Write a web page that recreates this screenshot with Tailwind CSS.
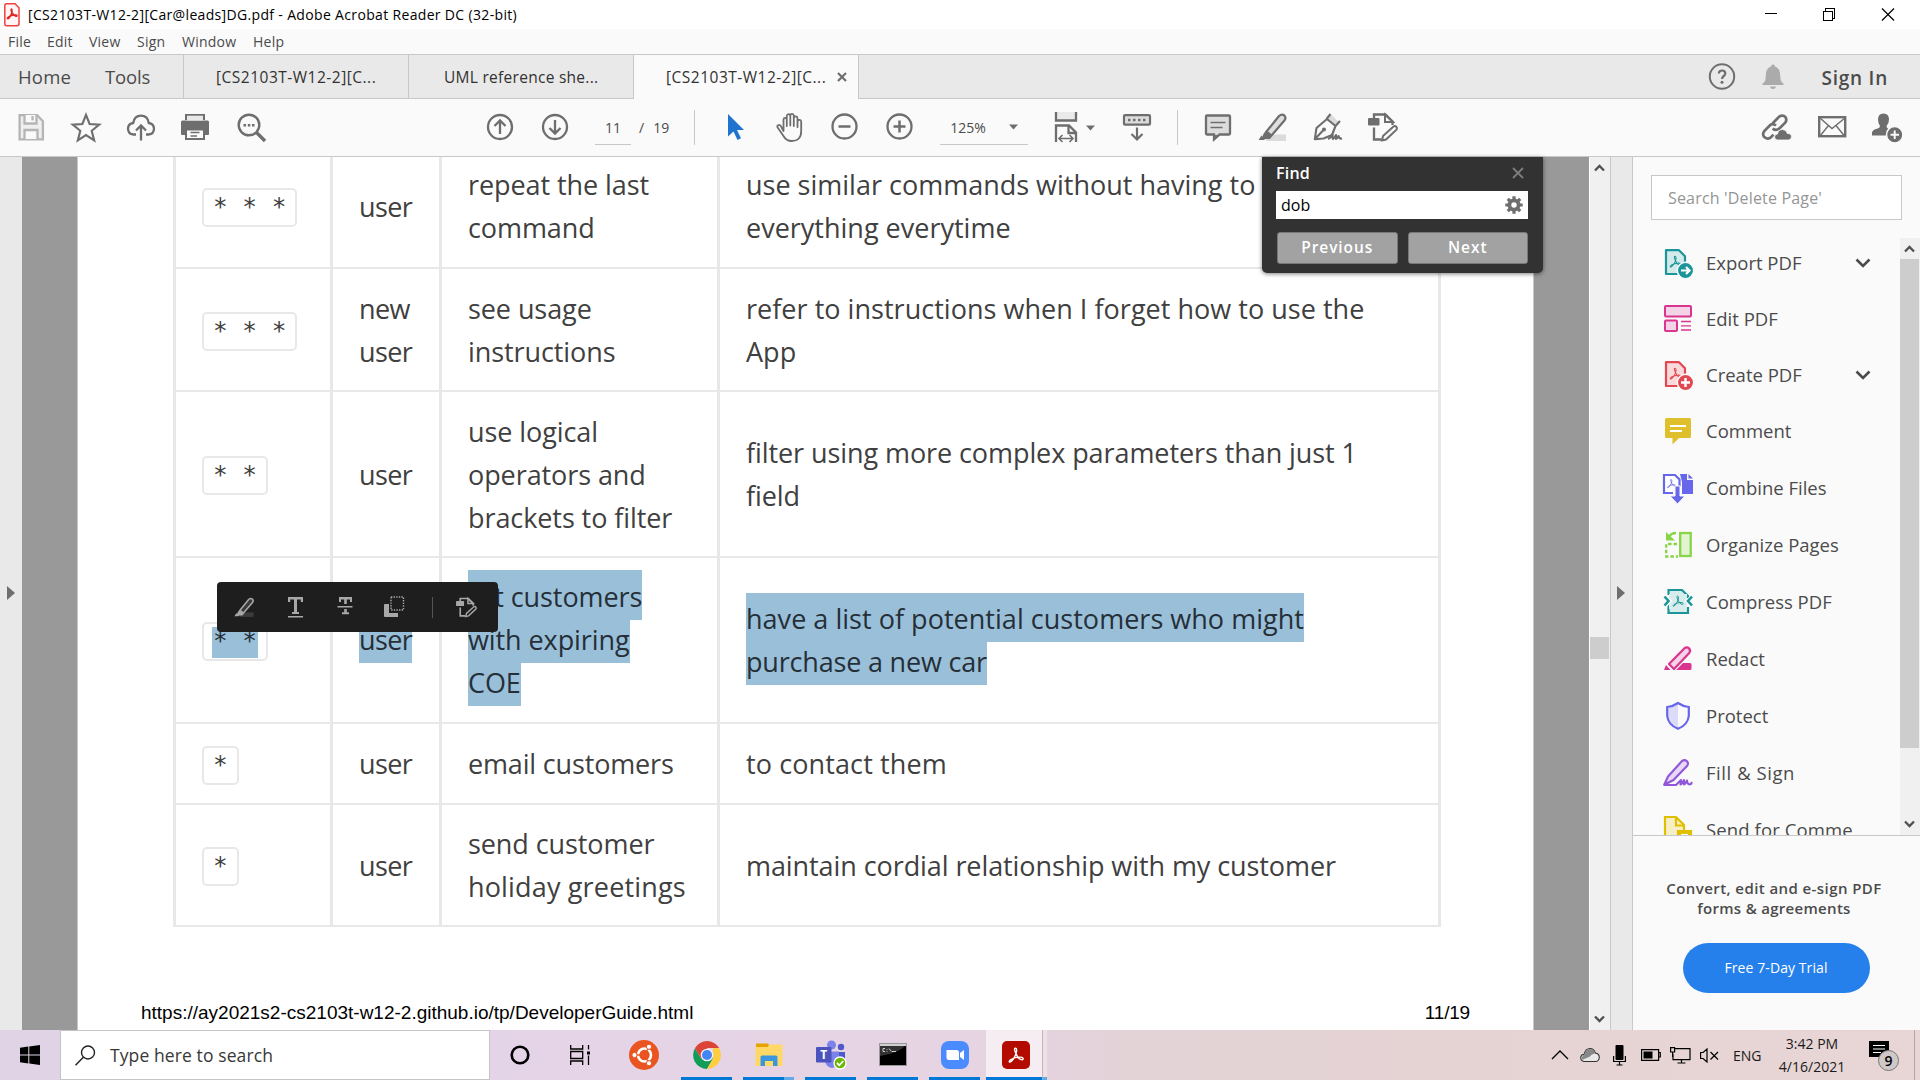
<!DOCTYPE html>
<html lang="en">
<head>
<meta charset="utf-8">
<title>[CS2103T-W12-2][Car@leads]DG.pdf - Adobe Acrobat Reader DC (32-bit)</title>
<script src="https://cdn.jsdelivr.net/npm/@tailwindcss/browser@4"></script>
</head>
<body class="w-[1920px] h-[1080px] overflow-hidden bg-white font-['Open_Sans',sans-serif] text-[#4b4b4b] flex flex-col whitespace-nowrap">

<!-- shared symbols -->
<svg class="hidden">
  <symbol id="tri" viewBox="0 0 32 32"><path d="M15 6c-2 0-1 4 1 8 2 5 6 9 9 9 3-1 1-4-3-4-5 0-11 2-14 4-3 3-2 4 0 3 4-2 8-10 9-16 0-2-1-4-2-4z" fill="none" stroke="currentColor" stroke-width="2"/></symbol>
  <symbol id="redactdoc" viewBox="0 0 32 33"><path d="M7 7V3.5h11.5l7 7V14M7 16.500V28.500h7.500" fill="none" stroke="currentColor" stroke-width="2.300"/><path d="M18 3.500v7.500h8z" fill="#fff" fill-opacity=".2" stroke="currentColor" stroke-width="2"/><rect x="1" y="7" width="11.500" height="7.500" rx="1" fill="currentColor"/><path d="M15 29.500l1-4.500 10.500-9.500q1.500-1 2.800.3t.2 2.900L19 28.500z" fill="none" stroke="currentColor" stroke-width="2"/></symbol>
  <symbol id="hl" viewBox="0 0 32 33"><rect x="9" y="23.500" width="20" height="6.500" fill="currentColor" opacity=".22"/><path d="M9.500 20.500L22 5q3-2.500 5.500-.3 2 2.300-.3 5L14.500 24.500z" fill="currentColor" fill-opacity=".2" stroke="currentColor" stroke-width="2.200" stroke-linejoin="round"/><path d="M8.500 20l6.500 5.500-2 2.500H6.500L5.800 24zM1.500 29l3-4.500 4 3.300L7 29z" fill="currentColor"/></symbol>
</svg>

<!-- title bar -->
<header class="h-[29px] shrink-0 flex items-center text-black text-[14px] pl-[4px]">
  <svg class="w-4 h-6" viewBox="0 0 16 24"><path d="M2.500.8h8.500l4 4v16q0 2-2 2H2.500q-1.700 0-1.700-2V2.800q0-2 1.700-2z" fill="#fff5f5" stroke="#f2413c" stroke-width="1.500"/><path d="M7.500 6c-1 1 0 3 1.500 5s4 3 4 1.700-5-.7-7.500.8-2.500 2-1.500 2.200S8 11 8 8.500 8 6 7.500 6z" fill="none" stroke="#e3251f" stroke-width="1.500"/></svg>
  <span class="ml-[8px] tracking-[0.024em]">[CS2103T-W12-2][Car@leads]DG.pdf - Adobe Acrobat Reader DC (32-bit)</span>
  <svg class="w-[132px] h-[14px] ml-auto mr-[25px] mb-[2px]" viewBox="0 0 132 14" fill="none" stroke="#000" stroke-width="1" shape-rendering="crispEdges"><path d="M2 6.500h12M60.500 4.500h9v9h-9zM62.500 4V1.500h9.500M71.500 1.500v9.500H70"/><path d="M119 1.500l12 12M131 1.500l-12 12" shape-rendering="auto" stroke-width="1.200"/></svg>
</header>

<!-- menu bar -->
<nav class="h-[25px] shrink-0 bg-[#fafafa] flex items-center text-[14px] text-[#4b4b4b] pl-[8px] tracking-[0.016em]">
  <span class="w-[39px]">File</span><span class="w-[42px]">Edit</span><span class="w-[48px]">View</span><span class="w-[45px]">Sign</span><span class="w-[71px]">Window</span><span>Help</span>
</nav>

<!-- tab bar -->
<div class="h-[45px] shrink-0 bg-[#e9e9e9] border-t border-[#c8c8c8] flex text-[15.500px] text-[#323232]">
  <div class="w-[184px] border-r border-b border-[#c8c8c8] flex items-center pl-[18px] text-[18.500px] text-[#4b4b4b] tracking-[0.01em]"><span class="w-[87px]">Home</span><span class="tracking-[-0.01em]">Tools</span></div>
  <div class="w-[225px] border-r border-b border-[#c8c8c8] flex items-center pl-[32px] pt-[2px] tracking-[0.032em]">[CS2103T-W12-2][C...</div>
  <div class="w-[225px] border-r border-b border-[#c8c8c8] flex items-center pl-[35px] pt-[2px] tracking-[0.018em]">UML reference she...</div>
  <div class="w-[225px] border-r border-[#c8c8c8] bg-[#fafafa] flex items-center pl-[32px] pt-[2px] tracking-[0.032em]">[CS2103T-W12-2][C...<svg class="w-[10px] h-[10px] ml-[11px] mb-[3px]" viewBox="0 0 10 10"><path d="M1 1l8 8M9 1L1 9" stroke="#6e6e6e" stroke-width="2.200"/></svg></div>
  <div class="flex-1 border-b border-[#c8c8c8] flex items-center justify-end pr-[32px] text-[#6e6e6e]">
    <svg class="w-[28px] h-[28px]" viewBox="0 0 28 28"><circle cx="14" cy="13.500" r="12.200" fill="none" stroke="currentColor" stroke-width="2"/><path d="M10.800 10.500q.2-3 3.300-3t3.200 2.800q0 1.500-1.600 2.700t-1.600 3" fill="none" stroke="currentColor" stroke-width="2.200"/><circle cx="14" cy="19.300" r="1.500" fill="currentColor"/></svg>
    <svg class="w-[22px] h-[26px] ml-[26px] text-[#ababab]" viewBox="0 0 22 26"><path d="M9 2.500q0-2 2-2t2 2q4.500 1.500 5 6.500.3 6 1 8 .8 1.800 2.500 2.500V21H.5v-1.500Q2.200 18.800 3 17q.7-2 1-8 .5-5 5-6.500zM8 22.500h6q-.5 2.500-3 2.500t-3-2.500z" fill="currentColor"/></svg>
    <span class="ml-[38px] mt-[3px] text-[19px] font-semibold text-[#4b4b4b] tracking-[0.04em]">Sign In</span>
  </div>
</div>

<!-- toolbar -->
<div class="h-[58px] shrink-0 bg-[#fafafa] border-b border-[#c8c8c8] flex items-center pl-[15px] text-[#6e6e6e]">
  <div class="flex gap-[23px]">
    <svg class="w-8 h-[33px]" viewBox="0 0 32 33" fill="none" stroke="#b5b5b5" stroke-width="2.300"><path d="M4.600 4.200h17.500l5.800 6V28.300H4.600z" fill="#efefef"/><path d="M9.500 4v8.500h12V4M9.500 28v-9h13v9" fill="#fafafa"/><path d="M17.500 5v4.500"/></svg>
    <svg class="w-8 h-[33px]" viewBox="0 0 32 33"><path d="M16 3.800l3.600 9.200 9.700.6-7.600 6.200 2.500 9.600L16 24l-8.200 5.400 2.500-9.600-7.600-6.200 9.700-.6z" fill="none" stroke="currentColor" stroke-width="2.100"/></svg>
    <svg class="w-8 h-[33px]" viewBox="0 0 32 33" fill="none" stroke="currentColor" stroke-width="2.300"><path d="M11 23.500H8.500q-5.500-.5-5.500-6 .3-5 5.200-5.500Q9.500 4.700 16 4.700T23.800 12q4.800.5 5.200 5.500 0 5.500-5.500 6H21M16 29.500V15M11 19.500l5-5 5 5"/></svg>
    <svg class="w-8 h-[33px]" viewBox="1 0 32 33"><path d="M6 3h20v6H6zM2 11q0-1.500 1.500-1.500h25Q30 9.500 30 11v12q0 1-1 1h-3v-6H6v6H3q-1 0-1-1z" fill="currentColor"/><path d="M8 4.700h16V9.500H8z" fill="#e8e8e8"/><path d="M7 18.500h18V28H7z" fill="#fafafa" stroke="currentColor" stroke-width="2"/><path d="M11.500 21.500h9M11.500 25h6.500" stroke="currentColor" stroke-width="1.500"/></svg>
    <svg class="w-8 h-[33px]" viewBox="0 0 32 33"><circle cx="14" cy="14" r="10.300" fill="none" stroke="currentColor" stroke-width="2.400"/><path d="M21.500 21.500l8.500 8.500" stroke="currentColor" stroke-width="3.300"/><path d="M8.500 13h2.500v2.500H8.500zM12.800 13h2.500v2.500h-2.500zM17 13h2.500v2.500H17z" fill="currentColor"/></svg>
  </div>
  <svg class="w-8 h-[33px] ml-[217px]" viewBox="0 0 32 33" fill="none" stroke="currentColor" stroke-width="2.300"><circle cx="16" cy="16" r="12"/><path d="M16 23V10M10.500 15L16 9.500l5.500 5.500"/></svg>
  <svg class="w-8 h-[33px] ml-[23px]" viewBox="0 0 32 33" fill="none" stroke="currentColor" stroke-width="2.300"><circle cx="16" cy="16" r="12"/><path d="M16 9v13M10.500 17l5.500 5.500 5.500-5.500"/></svg>
  <div class="ml-[24px] w-[36px] h-[35px] border-b border-[#c8c8c8] text-[14px] text-[#4b4b4b] flex items-center justify-center">11</div>
  <span class="ml-[8px] text-[14px] text-[#4b4b4b]">/</span><span class="ml-[9px] w-[16px] text-[14px] text-[#4b4b4b]">19</span>
  <div class="w-px h-[35px] bg-[#c8c8c8] ml-[25px]"></div>
  <div class="flex gap-[23px] ml-[24px]">
    <svg class="w-8 h-[33px]" viewBox="0 0 32 33"><path d="M9 3v22.500l5.500-5 4 8.500 3.500-1.800-4-8.200h7z" fill="#2074d0"/></svg>
    <svg class="w-8 h-[33px]" viewBox="0 0 32 33"><path d="M9.500 20V8.500q.2-1.700 1.700-1.700t1.600 1.700V15 5q.2-1.800 1.800-1.800T16.300 5v9.500V4.500q.2-1.700 1.800-1.700t1.700 1.700V15 7q.3-1.700 1.900-1.700T23.500 7v9-5.500q.3-1.700 1.900-1.700t1.800 1.700V20q0 10-9.500 10-5.500 0-8.200-5L3.500 16.300q-.6-1.700 1-2.300 1.400-.4 2.500 1.300z" fill="#fafafa" stroke="currentColor" stroke-width="1.800" stroke-linejoin="round"/></svg>
    <svg class="w-8 h-[33px]" viewBox="0 0 32 33" fill="none" stroke="currentColor" stroke-width="2.300"><circle cx="15.500" cy="15.500" r="12"/><path d="M9.500 15.500h12" stroke-width="2.500"/></svg>
    <svg class="w-8 h-[33px]" viewBox="0 0 32 33" fill="none" stroke="currentColor" stroke-width="2.300"><circle cx="15.500" cy="15.500" r="12"/><path d="M9.500 15.500h12M15.500 9.500v12" stroke-width="2.500"/></svg>
  </div>
  <div class="ml-[24px] w-[88px] h-[35px] border-b border-[#c8c8c8] text-[14px] text-[#4b4b4b] flex items-center justify-between pl-[10px] pr-[10px]">125%<svg class="w-[9px] h-[6px]" viewBox="0 0 9 6"><path d="M0 .5h9L4.500 5.500z" fill="#6e6e6e"/></svg></div>
  <svg class="w-8 h-[33px] ml-[22px]" viewBox="0 0 32 33" fill="none" stroke="currentColor" stroke-width="2.300"><path d="M6 1v8.500h20V1" fill="#eaeaea"/><path d="M6 31V14.500h13l7 7V31M18.500 15v7H26"/><path d="M9 27.500h14M12.500 24L9 27.500l3.500 3.500M19.500 24l3.500 3.500-3.500 3.500" stroke-width="1.600"/></svg>
  <svg class="w-[9px] h-[6px] ml-[4px]" viewBox="0 0 9 6"><path d="M0 .5h9L4.500 5.500z" fill="#6e6e6e"/></svg>
  <svg class="w-8 h-[33px] ml-[26px]" viewBox="0 0 32 33" fill="none" stroke="currentColor" stroke-width="2.200"><rect x="3" y="4.200" width="26" height="9.500" rx="1" fill="#ddd"/><path d="M7 9h18" stroke-dasharray="2.500 2.500" stroke-width="2.500"/><path d="M16 16.500V28M10.500 23l5.500 5.500 5.500-5.500"/></svg>
  <div class="w-px h-[35px] bg-[#c8c8c8] ml-[24px]"></div>
  <div class="flex gap-[23px] ml-[24px]">
    <svg class="w-8 h-[33px]" viewBox="0 0 32 33"><path d="M5 4.500h22q1 0 1 1v17q0 1-1 1H17.500L12 28.500v-5H5q-1 0-1-1v-17q0-1 1-1z" fill="#dcdcdc" stroke="currentColor" stroke-width="2.300"/><path d="M8.500 11.500h15M8.500 16.500h12" stroke="currentColor" stroke-width="1.500"/><path d="M12 24h6l-6 5.500z" fill="currentColor"/></svg>
    <svg class="w-8 h-[33px]"><use href="#hl"/></svg>
    <svg class="w-8 h-[33px]" viewBox="0 0 32 33" fill="none" stroke="currentColor" stroke-width="2.100" stroke-linejoin="round"><path d="M15 8l4-4.500 8 7.500-3.500 4z" fill="#dcdcdc" stroke="none"/><path d="M2.800 28.200L4.500 17 15 8l8.500 7-3.500 9-8.500 3.500zM3 28l8-8.500M18.500 3l-4 5M28 10l-4.500 5"/><circle cx="12" cy="18.500" r="1" fill="currentColor"/><path d="M16 28q3-1 4.500-4.500 0 4 .5 4.500 1.500-1 3-4v4q1.500-1 2.500-3 .5 3 3.500 2.500"/></svg>
    <svg class="w-8 h-[33px]"><use href="#redactdoc"/></svg>
  </div>
  <div class="flex gap-[23px] ml-auto mr-[17px]">
    <svg class="w-8 h-[33px]" viewBox="1 0 32 33" fill="none" stroke="currentColor" stroke-width="2.700"><path d="M12.500 12.500l6.500-6.800q4-2.500 6.500.5 1.800 2.800-.3 5.500l-6 6q-3.500 2.500-6.500-.3M16 14.500q-3.500-2.500-6-.2l-5.500 5.500q-2.500 3-.5 6 3 3 6.500.8l3-3"/><path d="M17.500 29q-3-.3-3-3t3-3q.7-4.500 4.800-4.500t5 4q4.200-.2 4.200 3.500-.2 2.700-3 3z" fill="currentColor" stroke="#fafafa" stroke-width=".8"/></svg>
    <svg class="w-8 h-[33px]" viewBox="0 0 32 33" fill="none" stroke="currentColor"><rect x="3.200" y="6.200" width="26" height="19" stroke-width="2.400"/><path d="M4 7l12 10.500L29 7M4 25l8.500-10.500M28.500 25L20 14.500" stroke-width="1.400"/></svg>
    <svg class="w-8 h-[33px]" viewBox="0 0 32 33"><path d="M12.500 2.500q5.500 0 5.500 6 0 4-2.500 6.500 0 2 2 3 2.500 1 2.500 2l-3 4.500H1v-3q.5-2.800 5-3.800 3-.7 3-2.700Q7 12.500 7 8.500q0-6 5.500-6z" fill="currentColor"/><circle cx="23.700" cy="23.700" r="8.200" fill="currentColor" stroke="#fafafa" stroke-width="1.500"/><path d="M23.700 19.500v8.500M19.500 23.700H28" stroke="#fafafa" stroke-width="2"/></svg>
  </div>
</div>

<!-- workspace -->
<main class="h-[873px] shrink-0 flex relative">
  <div class="w-[22px] bg-[#e9e9e9] flex items-center pl-[7px]"><svg class="w-[8px] h-[14px] mb-[2px]" viewBox="0 0 8 14"><path d="M0 0l8 7-8 7z" fill="#6e6e6e"/></svg></div>
  <div class="w-[1567px] bg-[#999] flex pl-[55px] overflow-hidden">
    <!-- page -->
    <section class="w-[1457px] h-full bg-white border-x border-[#c8c8c8] flex flex-col relative">
      <div class="ml-[95px] mt-[-14px] w-[1268px] border-r-[3px] border-b-2 border-[#e8e8e8] text-[27px] leading-[43px] text-[#404040] tracking-[-0.003em]">
        <div class="h-[124px] flex border-t-2 border-[#e8e8e8] [&>div]:border-l-[3px] [&>div]:border-[#e8e8e8] [&>div]:flex [&>div]:items-center [&>div]:pl-[26px]">
          <div class="w-[157px]"><code class="mt-[3px] h-[39px] px-[9px] border-2 border-[#e8e8e8] rounded-[5px] font-['DejaVu_Sans_Mono',monospace] text-[24.400px] leading-[34px] tracking-normal">* * *</code></div>
          <div class="w-[109px] tracking-[-0.022em]">user</div><div class="w-[278px]">repeat the last<br>command</div><div class="flex-1 tracking-normal">use similar commands without having to<br>everything everytime</div>
        </div>
        <div class="h-[123px] flex border-t-2 border-[#e8e8e8] [&>div]:border-l-[3px] [&>div]:border-[#e8e8e8] [&>div]:flex [&>div]:items-center [&>div]:pl-[26px]">
          <div class="w-[157px]"><code class="mt-[3px] h-[39px] px-[9px] border-2 border-[#e8e8e8] rounded-[5px] font-['DejaVu_Sans_Mono',monospace] text-[24.400px] leading-[34px] tracking-normal">* * *</code></div>
          <div class="w-[109px] tracking-[-0.022em]">new<br>user</div><div class="w-[278px]">see usage<br>instructions</div><div class="flex-1 tracking-[0.001em]">refer to instructions when I forget how to use the<br>App</div>
        </div>
        <div class="h-[166px] flex border-t-2 border-[#e8e8e8] [&>div]:border-l-[3px] [&>div]:border-[#e8e8e8] [&>div]:flex [&>div]:items-center [&>div]:pl-[26px]">
          <div class="w-[157px]"><code class="mt-[3px] h-[39px] px-[9px] border-2 border-[#e8e8e8] rounded-[5px] font-['DejaVu_Sans_Mono',monospace] text-[24.400px] leading-[34px] tracking-normal">* *</code></div>
          <div class="w-[109px] tracking-[-0.022em]">user</div><div class="w-[278px]">use logical<br>operators and<br>brackets to filter</div><div class="flex-1">filter using more complex parameters than just 1<br>field</div>
        </div>
        <div class="h-[166px] flex border-t-2 border-[#e8e8e8] text-[#262f38] [&>div]:border-l-[3px] [&>div]:border-[#e8e8e8] [&>div]:flex [&>div]:flex-col [&>div]:items-start [&>div]:justify-center [&>div]:pl-[26px] [&>div]:pt-[3px] [&_span]:bg-[#9ac0d9] [&_span]:h-[43px] [&_span]:leading-[40px]">
          <div class="w-[157px]"><code class="h-[39px] px-[8px] border-2 border-[#e8e8e8] rounded-[5px] font-['DejaVu_Sans_Mono',monospace] text-[24.400px] tracking-normal flex items-end"><b class="bg-[#9ac0d9] font-normal h-[31px] mb-[1px] leading-[27px] pl-[1px] pr-[1px]">* *</b></code></div>
          <div class="w-[109px] tracking-[-0.022em]"><span>user</span></div><div class="w-[278px]"><span class="mt-[-7px] pt-[7px] box-content">list customers</span><span>with expiring</span><span>COE</span></div><div class="flex-1"><span class="mt-[-6px] pt-[6px] box-content tracking-[0.001em]">have a list of potential customers who might</span><span class="tracking-[-0.007em]">purchase a new car</span></div>
        </div>
        <div class="h-[81px] flex border-t-2 border-[#e8e8e8] [&>div]:border-l-[3px] [&>div]:border-[#e8e8e8] [&>div]:flex [&>div]:items-center [&>div]:pl-[26px]">
          <div class="w-[157px]"><code class="mt-[3px] h-[39px] px-[9px] border-2 border-[#e8e8e8] rounded-[5px] font-['DejaVu_Sans_Mono',monospace] text-[24.400px] leading-[34px] tracking-normal">*</code></div>
          <div class="w-[109px] tracking-[-0.022em]">user</div><div class="w-[278px] tracking-[-0.006em]">email customers</div><div class="flex-1 tracking-[0.004em]">to contact them</div>
        </div>
        <div class="h-[122px] flex border-t-2 border-[#e8e8e8] [&>div]:border-l-[3px] [&>div]:border-[#e8e8e8] [&>div]:flex [&>div]:items-center [&>div]:pl-[26px]">
          <div class="w-[157px]"><code class="mt-[3px] h-[39px] px-[9px] border-2 border-[#e8e8e8] rounded-[5px] font-['DejaVu_Sans_Mono',monospace] text-[24.400px] leading-[34px] tracking-normal">*</code></div>
          <div class="w-[109px] tracking-[-0.022em]">user</div><div class="w-[278px]"><p>send customer<br><span class="tracking-[0.006em]">holiday greetings</span></p></div><div class="flex-1">maintain cordial relationship with my customer</div>
        </div>
      </div>
      <footer class="mt-auto mb-[5px] flex justify-between pl-[63px] pr-[63px] font-['Liberation_Sans',sans-serif] text-[19px] leading-[24px] text-black"><span>https://ay2021s2-cs2103t-w12-2.github.io/tp/DeveloperGuide.html</span><span class="tracking-[-0.01em]">11/19</span></footer>
      <!-- selection toolbar -->
      <div class="absolute left-[139px] top-[425px] w-[281px] h-[50px] rounded-[4px] bg-[#1e1e1e] text-[#a8a8a8] flex items-center">
        <svg class="w-[23px] h-[23px] ml-[16px]"><use href="#hl"/></svg>
        <svg class="w-[22px] h-[24px] ml-[28px]" viewBox="0 0 22 24" fill="currentColor"><path d="M4 2h15v5h-2.200V4.500h-3.800V17H15v2H8v-2h2V4.500H6.200V7H4zM4 21h15v1.500H4z"/></svg>
        <svg class="w-[22px] h-[24px] ml-[28px]" viewBox="0 0 22 24" fill="currentColor"><path d="M5 2h13v5h-2V4.500h-3.200V9h-2.600V4.500H7V7H5zM3.500 11h15v1.500h-15zM10.200 14h2.600v3.200H15v2H8v-2h2.200z"/></svg>
        <svg class="w-[22px] h-[24px] ml-[27px]" viewBox="0 0 22 24"><path d="M1 10q0-1 1-1h4v9h9v4H2q-1 0-1-1z" fill="currentColor"/><rect x="8" y="2" width="12.500" height="13" fill="none" stroke="currentColor" stroke-width="1.400" stroke-dasharray="1.400 1.200"/></svg>
        <div class="w-px h-[21px] bg-[#555] ml-[27px]"></div>
        <svg class="w-[23px] h-[23px] ml-[22px]"><use href="#redactdoc"/></svg>
      </div>
    </section>
  </div>
  <!-- document scrollbar -->
  <div class="w-[22px] border-l border-r border-[#c8c8c8] border-l-white bg-[#f0f0f0] flex flex-col items-center text-[#505050]">
    <svg class="w-[11px] h-[8px] mt-[7px] mr-[2px]" viewBox="0 0 11 8"><path d="M1 6.500l4.500-4.500L10 6.500" fill="none" stroke="currentColor" stroke-width="2.300"/></svg>
    <div class="w-[19px] h-[22px] bg-[#cdcdcd] mt-[465px] mr-[1px]"></div>
    <svg class="w-[11px] h-[8px] mt-auto mb-[7px] mr-[2px]" viewBox="0 0 11 8"><path d="M1 1.500L5.500 6 10 1.500" fill="none" stroke="currentColor" stroke-width="2.300"/></svg>
  </div>
  <div class="w-[22px] bg-[#e9e9e9] border-r border-[#c8c8c8] flex items-center pl-[6px]"><svg class="w-[8px] h-[14px] mb-[2px]" viewBox="0 0 8 14"><path d="M0 0l8 7-8 7z" fill="#6e6e6e"/></svg></div>

  <!-- tools panel -->
  <aside class="w-[287px] bg-[#fafafa] flex flex-col">
    <div class="h-[81px] pt-[18px] pl-[18px]"><div class="w-[251px] h-[45px] bg-white border border-[#c8c8c8] text-[16px] text-[#959595] flex items-center pl-[16px] tracking-[0.011em]">Search 'Delete Page'</div></div>
    <div class="h-[598px] border-b border-[#c8c8c8] flex overflow-hidden">
      <ul class="w-[267px] mt-[-1px] text-[18.500px] [&>li]:flex [&>li]:items-center [&>li]:pl-[29px] [&_svg]:shrink-0 [&_b]:font-normal [&_b]:ml-[12px] [&>li]:h-[57px]">
        <li class="!h-[52px]"><svg class="w-8 h-8 text-[#1b959a]" viewBox="0 0 32 32"><path d="M4 3.200h13l6 6V27H4z" fill="#d3eaeb" stroke="currentColor" stroke-width="2.200" stroke-linejoin="round"/><use href="#tri" x="5" y="6" width="17" height="17"/><circle cx="23.500" cy="23.500" r="8.200" fill="currentColor" stroke="#fafafa" stroke-width="1.500"/><path d="M19 23.500h8M24 20l3.500 3.500L24 27" fill="none" stroke="#fff" stroke-width="2.200"/></svg><b>Export PDF</b><svg class="w-4 h-[10px] ml-auto mr-[29px]" viewBox="0 0 16 10"><path d="M1.500 1.500L8 8l6.500-6.500" fill="none" stroke="#4b4b4b" stroke-width="2.600"/></svg></li>
        <li class="!h-[60px]"><svg class="w-8 h-8 text-[#da3490]" viewBox="0 0 32 32" fill="none" stroke="currentColor" stroke-width="2"><rect x="3" y="3" width="26" height="10.500" rx="1" fill="#f5d3e6"/><rect x="3" y="17.500" width="12" height="10.500" rx="1" fill="#f5d3e6"/><path d="M19 18.500h10M19 22.800h10M19 27h10" stroke-width="1.300"/></svg><b>Edit PDF</b></li>
        <li class="!h-[52px]"><svg class="w-8 h-8 text-[#e34850]" viewBox="0 0 32 32"><path d="M4 3.200h13l6 6V27H4z" fill="#f9dadc" stroke="currentColor" stroke-width="2.200" stroke-linejoin="round"/><use href="#tri" x="5" y="6" width="17" height="17"/><circle cx="23.500" cy="23.500" r="8.200" fill="currentColor" stroke="#fafafa" stroke-width="1.500"/><path d="M19 23.500h9M23.500 19v9" fill="none" stroke="#fff" stroke-width="2.400"/></svg><b>Create PDF</b><svg class="w-4 h-[10px] ml-auto mr-[29px]" viewBox="0 0 16 10"><path d="M1.500 1.500L8 8l6.500-6.500" fill="none" stroke="#4b4b4b" stroke-width="2.600"/></svg></li>
        <li class="!h-[60px]"><svg class="w-8 h-8" viewBox="0 0 32 32"><path d="M4.500 3h23q1.500 0 1.500 1.500v17q0 1.500-1.500 1.500H17l-6.500 6.500V23h-6Q3 23 3 21.500v-17Q3 3 4.500 3z" fill="#dfbf2c"/><path d="M8 11h16M8 16h12" stroke="#fff" stroke-width="2"/></svg><b>Comment</b></li>
        <li class="!h-[54px]"><svg class="w-8 h-8 text-[#6767ec]" viewBox="0 0 32 32"><path d="M18 2h7v6h6v14H20V10z" fill="currentColor"/><path d="M26.500 2l4.500 4.500h-4.500z" fill="currentColor"/><path d="M11 21H2V3h11l4.500 4.500V14" fill="#fff" stroke="currentColor" stroke-width="2.200"/><use href="#tri" x="3" y="5" width="13" height="13" class="text-[#6767ec]"/><path d="M13 14h5v10h5l-7.500 8L8 24h5z" fill="currentColor" stroke="#fafafa" stroke-width="1"/></svg><b>Combine Files</b></li>
        <li class="!h-[60px]"><svg class="w-8 h-8 text-[#88d547]" viewBox="0 0 32 32" fill="none" stroke="currentColor" stroke-width="2.300"><rect x="18.200" y="4" width="10.500" height="23" fill="#e2f4d2"/><path d="M15 15H4.200v12.500H16" stroke-dasharray="3.500 2"/><path d="M14 4q-5 0-7 4" stroke-width="2.600"/><path d="M4 3v8.500h9z" fill="currentColor" stroke="none"/></svg><b>Organize Pages</b></li>
        <li class="!h-[54px]"><svg class="w-8 h-8 text-[#1b959a]" viewBox="0 0 32 32" fill="none" stroke="currentColor" stroke-width="2.200"><path d="M6.500 9V4H20l6 6v2.500M6.500 19v8H26v-6" fill="#d8ecec"/><path d="M7 8h18v15H7z" fill="#d8ecec" stroke="none"/><use href="#tri" x="8" y="7" width="16" height="16"/><path d="M2.500 11L7 15l-4.500 4.500M30.500 11L26 15l4.500 4.500" stroke="#fafafa" stroke-width="5"/><path d="M2.500 10.500L6.500 15l-4 4.500M30 10.500L26 15l4 4.500" stroke-width="2.600"/></svg><b>Compress PDF</b></li>
        <li class="!h-[60px]"><svg class="w-8 h-8 text-[#da3490]" viewBox="0 0 32 32"><path d="M14 27l7-7h7q1.500 0 1.500 1.500v4q0 1.500-1.500 1.500zM2 27l2-5 4.500 5z" fill="currentColor"/><path d="M7 21L22.500 5.200q2.500-1.700 4.500.2t.3 4.500L12 26z" fill="#f5d3e6" stroke="currentColor" stroke-width="2.200" stroke-linejoin="round"/></svg><b>Redact</b></li>
        <li class="!h-[54px]"><svg class="w-8 h-8 text-[#6767ec]" viewBox="0 0 32 32"><path d="M16 3Q11 6.500 5 7v9q1 9 11 12.500z" fill="#dcdcf9"/><path d="M16 3q-5 3.500-10.800 4v9Q6.200 25 16 28.800 25.800 25 26.800 16V7Q21 6.500 16 3z" fill="none" stroke="currentColor" stroke-width="2.200"/></svg><b>Protect</b></li>
        <li class="!h-[60px]"><svg class="w-8 h-8 text-[#9256d9]" viewBox="0 0 32 32" fill="none" stroke="currentColor" stroke-width="2.100" stroke-linejoin="round"><path d="M2.200 27.800L6 19.500 20 4q2.500-2 5 .2 2 2.300 0 4.800L11.500 23z" fill="#e6d8f6"/><path d="M2 28h12l5-5-.5 4.500q2-1 3.500-4.500v4.500q2-1.500 3-4 .5 5 4 3.500l1-2"/></svg><b class="tracking-[0.03em]">Fill &amp; Sign</b></li>
        <li class="!h-[54px]"><svg class="w-8 h-8 text-[#dfbf00]" viewBox="0 0 32 32" fill="none" stroke="currentColor" stroke-width="2.200"><path d="M3 3h11l8 8v19H3z" fill="#f6eec5"/><path d="M14 3v8.500h8.500"/><path d="M16 17h13v13H16z" fill="currentColor"/><path d="M19 21h7" stroke="#fff"/></svg><b class="tracking-[0.006em]">Send for Comme</b></li>
      </ul>
      <div class="w-[20px] bg-[#f0f0f0] flex flex-col items-center text-[#505050]">
        <svg class="w-[11px] h-[8px] mt-[7px] mr-[2px] shrink-0" viewBox="0 0 11 8"><path d="M1 6.500l4.500-4.500L10 6.500" fill="none" stroke="currentColor" stroke-width="2.300"/></svg>
        <div class="w-[19px] h-[489px] bg-[#cdcdcd] mt-[6px] mr-[1px]"></div>
        <svg class="w-[11px] h-[8px] mt-auto mb-[7px] mr-[2px]" viewBox="0 0 11 8"><path d="M1 1.500L5.500 6 10 1.500" fill="none" stroke="currentColor" stroke-width="2.300"/></svg>
      </div>
    </div>
    <div class="flex-1 flex flex-col items-center pt-[42px] pr-[3px]">
      <p class="text-[15px] leading-[20px] font-semibold text-center tracking-[0.028em] mr-[2px]">Convert, edit and e-sign PDF<br><span class="tracking-[0.02em]">forms &amp; agreements</span></p>
      <div class="mt-[25px] ml-[2px] w-[187px] h-[50px] rounded-full bg-[#2680eb] text-white text-[14px] flex items-center justify-center tracking-[0.006em] pb-px">Free 7-Day Trial</div>
    </div>
  </aside>

  <!-- find box -->
  <div class="absolute left-[1262px] top-0 w-[281px] h-[116px] bg-[#323232] rounded-b-[5px] shadow-[0_1px_4px_rgba(0,0,0,0.5)] text-white pl-[14px] pr-[15px]">
    <div class="h-[34px] flex items-center justify-between text-[16px] font-semibold tracking-[0.013em] pb-[2px]">Find<svg class="w-[12px] h-[12px] mr-[4px] mb-[1px]" viewBox="0 0 12 12"><path d="M1 1l10 10M11 1L1 11" stroke="#7d7d7d" stroke-width="1.800"/></svg></div>
    <div class="h-[28px] bg-white text-black text-[16px] flex items-center justify-between pl-[5px] pr-[5px]">dob<svg class="w-[18px] h-[18px]" viewBox="0 0 18 18"><g stroke="#6e6e6e"><circle cx="9" cy="9" r="4.600" fill="none" stroke-width="3.800"/><path d="M9 .3v3M9 14.700v3M.3 9h3M14.700 9h3M2.800 2.800L5 5M13 13l2.200 2.200M15.200 2.800L13 5M5 13l-2.200 2.200" stroke-width="3.200"/></g></svg></div>
    <div class="flex gap-[10px] mt-[13px] pl-px text-[15.500px] font-semibold tracking-[0.06em]"><div class="w-[121px] h-[32px] rounded-[3px] bg-[#a2a2a2] border border-[#787878] flex items-center justify-center">Previous</div><div class="w-[121px] h-[32px] rounded-[3px] bg-[#a2a2a2] border border-[#787878] flex items-center justify-center">Next</div></div>
  </div>
</main>

<!-- taskbar -->
<footer class="h-[50px] shrink-0 flex bg-[linear-gradient(90deg,#e0d3e6_0%,#e5d4e7_30%,#e6d4e3_50%,#e3d3d6_60%,#e6d3d4_80%,#e8d5d6_100%)]">
  <div class="w-[60px] flex items-center justify-center"><svg class="w-5 h-5" viewBox="0 0 20 20"><path d="M0 2.800L8.300 1.600v7.900H0zM9.300 1.400L20 0v9.500H9.300zM0 10.500h8.300v7.900L0 17.200zM9.300 10.500H20V20L9.300 18.500z"/></svg></div>
  <div class="w-[430px] h-[50px] bg-white border border-[#c4c4c8] flex items-center pl-[14px] text-[17.500px] text-[#383838] tracking-[0.006em]"><svg class="w-[21px] h-[21px] mr-[14px]" viewBox="0 0 21 21"><circle cx="13" cy="7.500" r="6.500" fill="none" stroke="#222" stroke-width="1.400"/><path d="M8.300 12.200L.5 20.300" stroke="#222" stroke-width="1.500"/></svg>Type here to search</div>
  <div class="w-[60px] flex items-center justify-center"><svg class="w-5 h-5" viewBox="0 0 20 20"><circle cx="10" cy="10" r="8.300" fill="none" stroke="#000" stroke-width="2.600"/></svg></div>
  <div class="w-[60px] flex items-center justify-center"><svg class="w-5 h-5" viewBox="0 0 20 20" fill="none" stroke="#000" stroke-width="1.300"><path d="M.7 0v4h12V0M.7 20v-4h12v4M.7 6.500h12v7H.7zM18.500 0v4.500M18.500 10.500V20"/><path d="M17 6.500h3v3h-3z" fill="#000" stroke="none"/></svg></div>
  <div class="w-[65px] flex items-center pl-[19px]"><svg class="w-[30px] h-[30px]" viewBox="0 0 30 30"><circle cx="15" cy="15" r="15" fill="#e95420"/><circle cx="15.500" cy="15" r="6.500" fill="none" stroke="#fff" stroke-width="2.600"/><path d="M15.500 15l-9 0M15.500 15l4.500-8M15.500 15l4.500 8" stroke="#e95420" stroke-width="1.300"/><g fill="#fff" stroke="#e95420" stroke-width="1"><circle cx="5.500" cy="15" r="2.600"/><circle cx="20" cy="6.800" r="2.600"/><circle cx="20" cy="23.200" r="2.600"/></g></svg></div>
  <div class="flex gap-[11px] ml-[6px]">
    <div class="w-[51px] border-b-[3px] border-[#0078d7] flex items-center justify-center pt-[3px]"><svg class="w-7 h-7" viewBox="0 0 28 28"><path d="M2 7A14 14 0 0 0 14 28l6-10.500H8z" fill="#0f9d58"/><path d="M26.100 7A14 14 0 0 1 14 28l6-10.500L20 7z" fill="#ffcd40"/><path d="M2 7l6 10.500L14 14l6 3.500L14 7h12.200A14 14 0 0 0 2 7z" fill="#db4437"/><circle cx="14" cy="14" r="6.300" fill="#f1f1f1"/><circle cx="14" cy="14" r="5" fill="#4285f4"/></svg></div>
    <div class="w-[51px] border-b-[3px] border-[#0078d7] flex items-center justify-center pt-[3px] relative"><svg class="w-7 h-7" viewBox="0 0 28 28"><path d="M1 2.500h12l1.500 2.500H27v20H1z" fill="#e8a200"/><path d="M.5 6h12l2-2.500h13V25H.5z" fill="#ffd866"/><path d="M5.500 25V16q0-1.500 1.500-1.500h14q1.500 0 1.500 1.500v9H18v-5h-8v5z" fill="#3a96dd"/></svg><i class="absolute right-0 -bottom-[3px] w-[10px] h-[3px] bg-[#61aae6]"></i></div>
    <div class="w-[51px] border-b-[3px] border-[#0078d7] flex items-center justify-center pt-[3px]"><svg class="w-8 h-[30px]" viewBox="0 0 32 30"><circle cx="16.500" cy="5" r="4.500" fill="#7b83eb"/><circle cx="26" cy="7" r="3.200" fill="#5059c9"/><path d="M21 12h9v8q-1 5-5 5t-5-4z" fill="#5059c9"/><path d="M10 11.500h14V21q-1 6-7 7-6-1-7-7z" fill="#7b83eb"/><rect x="1" y="7" width="15.500" height="15.500" rx="1" fill="#4b53bc"/><text x="8.700" y="19" text-anchor="middle" font-size="12" font-weight="700" fill="#fff" font-family="Open Sans">T</text><circle cx="25" cy="23" r="6" fill="#6bb700" stroke="#fff" stroke-width="1.300"/><path d="M22 23l2.300 2.300L28.300 21" fill="none" stroke="#fff" stroke-width="1.800"/></svg></div>
    <div class="w-[51px] border-b-[3px] border-[#0078d7] flex items-center justify-center pt-[1px]"><svg class="w-7 h-[23px]" viewBox="0 0 28 23"><rect x=".5" y=".5" width="27" height="22" fill="#000" stroke="#999"/><rect x="1" y="1" width="26" height="2" fill="#d0d0d0"/><path d="M1 3h25Q20 10 1 13z" fill="#333"/><path d="M4 5.500v3M4 5.500h2M4 8.500h2M8 6v.8M8 8v.8M10 5.500l2.500 3M13 8.500h4" stroke="#ccc" stroke-width="1"/></svg></div>
    <div class="w-[51px] border-b-[3px] border-[#0078d7] flex items-center justify-center pt-[3px]"><svg class="w-7 h-7" viewBox="0 0 28 28"><rect width="28" height="28" rx="8" fill="#4a8cff"/><path d="M5.500 9h10q2.500 0 2.500 2.500V19H8q-2.500 0-2.500-2.500zM19 12l4-3v10l-4-3z" fill="#fff"/></svg></div>
  </div>
  <div class="w-[56px] ml-[6px] bg-[#f5edf1] border-b-[3px] border-[#0078d7] flex items-center justify-center pt-[3px] pl-[4px]"><svg class="w-7 h-7 text-white" viewBox="0 0 28 28"><rect width="28" height="28" rx="5" fill="#b30b00"/><use href="#tri" x="3" y="3" width="22" height="22"/></svg></div>
  <div class="w-[5px] bg-[#eee0e4] border-l border-[#c5b6bd] border-b-[3px] border-b-[#61aae6]"></div>
  <div class="ml-auto flex items-center text-[#1a1a1a] text-[14px]">
    <svg class="w-[18px] h-[10px]" viewBox="0 0 18 10"><path d="M1 9l8-8 8 8" fill="none" stroke="#000" stroke-width="1.300"/></svg>
    <svg class="w-[20px] h-[16px] ml-[11px]" viewBox="0 0 20 16"><path d="M4 14.500q-3.300-.5-3.300-4 .3-3 3.500-3.300Q5.500 1.500 10 1.500q4 0 5.300 4.500 4 .5 4 4.500-.3 3.500-3.300 4z" fill="#e8e8e8" stroke="#333" stroke-width="1.100"/><path d="M4.200 7.200Q6 2 10 2t5 4.300q-4 1-5.500 3.500l-7 3q-2-2 1.700-5.600z" fill="#888"/></svg>
    <svg class="w-[13px] h-[21px] ml-[13px]" viewBox="0 0 13 21"><rect x="2.500" width="8" height="15" rx="1" fill="#000"/><path d="M.6 11v5.500h11.800V11M6.500 17v3M3.500 20h6" fill="none" stroke="#000" stroke-width="1.200"/></svg>
    <svg class="w-[20px] h-[12px] ml-[15px]" viewBox="0 0 20 12"><path d="M.6.600h17v10.800H.6zM17.500 3.500h1.800v4.500h-1.800" fill="none" stroke="#000" stroke-width="1.200"/><path d="M2.500 2.500h9v7h-9z"/></svg>
    <svg class="w-[21px] h-[17px] ml-[9px]" viewBox="0 0 21 17" fill="none" stroke="#000" stroke-width="1.200"><path d="M5 1.600h15v11H3V7M11.500 12.500v3.500M7.500 16h8M.6.600h4V5h-4zM2.600 5v5"/></svg>
    <svg class="w-[19px] h-[15px] ml-[9px]" viewBox="0 0 19 15" fill="none" stroke="#000" stroke-width="1.200"><path d="M.6 4.500h2.500L7 1v13l-3.900-3.500H.6zM10.500 4l7.500 7.500M18 4l-7.500 7.500"/></svg>
    <span class="w-[28px] ml-[14px]">ENG</span>
    <div class="w-[70px] ml-[16px] text-center leading-[23px]">3:42 PM<br>4/16/2021</div>
    <div class="relative w-[30px] h-[30px] ml-[22px] mt-[2px]">
      <svg class="w-[20px] h-[20px]" viewBox="0 0 20 20"><path d="M0 0h20v16H10l-5 0H0z"/><path d="M4 4.500h12M4 8h12M4 11.500h8" stroke="#fff" stroke-width="1.200"/></svg>
      <div class="absolute left-[9px] top-[9px] w-[21px] h-[21px] rounded-full bg-[#cfc8c8] border border-[#777] flex items-center justify-center text-[14px] font-semibold text-black">9</div>
    </div>
    <div class="w-px h-[50px] bg-[#b5a7a9] ml-[15px] mr-[5px]"></div>
  </div>
</footer>
</body>
</html>
